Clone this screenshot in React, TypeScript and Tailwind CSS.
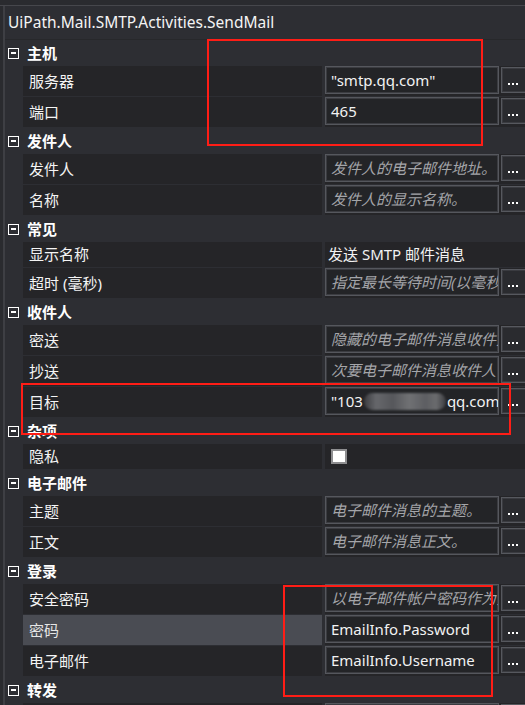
type Row = {
  label: string;
  kind: "input" | "text" | "check" | "blur";
  value?: string;
  placeholder?: string;
  active?: boolean;
};

type Section = { title: string; rows: Row[] };

const sections: Section[] = [
  {
    title: "主机",
    rows: [
      { label: "服务器", kind: "input", value: '"smtp.qq.com"' },
      { label: "端口", kind: "input", value: "465" },
    ],
  },
  {
    title: "发件人",
    rows: [
      { label: "发件人", kind: "input", placeholder: "发件人的电子邮件地址。" },
      { label: "名称", kind: "input", placeholder: "发件人的显示名称。" },
    ],
  },
  {
    title: "常见",
    rows: [
      { label: "显示名称", kind: "text", value: "发送 SMTP 邮件消息" },
      { label: "超时 (毫秒)", kind: "input", placeholder: "指定最长等待时间(以毫秒为单位)" },
    ],
  },
  {
    title: "收件人",
    rows: [
      { label: "密送", kind: "input", placeholder: "隐藏的电子邮件消息收件人" },
      { label: "抄送", kind: "input", placeholder: "次要电子邮件消息收件人" },
      { label: "目标", kind: "blur" },
    ],
  },
  { title: "杂项", rows: [{ label: "隐私", kind: "check" }] },
  {
    title: "电子邮件",
    rows: [
      { label: "主题", kind: "input", placeholder: "电子邮件消息的主题。" },
      { label: "正文", kind: "input", placeholder: "电子邮件消息正文。" },
    ],
  },
  {
    title: "登录",
    rows: [
      { label: "安全密码", kind: "input", placeholder: "以电子邮件帐户密码作为安全字符串" },
      { label: "密码", kind: "input", value: "EmailInfo.Password", active: true },
      { label: "电子邮件", kind: "input", value: "EmailInfo.Username" },
    ],
  },
  { title: "转发", rows: [{ label: "邮件消息", kind: "input" }] },
];

function Minus() {
  return (
    <div className="ml-[3px] flex h-[11px] w-[11px] items-center justify-center border border-white">
      <div className="h-[1.5px] w-[5px] bg-white" />
    </div>
  );
}

function Dots() {
  return (
    <div className="ml-[2px] mt-px flex h-[26px] w-[30px] shrink-0 items-end gap-[2px] border border-[#56585e] bg-[#2a2b2f] pb-[7px] pl-[6px] shadow-[inset_0_0_0_1px_#3a3b40]">
      <div className="h-[2px] w-[2px] bg-white" />
      <div className="h-[2px] w-[2px] bg-white" />
      <div className="h-[2px] w-[2px] bg-white" />
    </div>
  );
}

function Box({ children }: { children?: React.ReactNode }) {
  return (
    <div className="flex h-[28px] w-[174px] shrink-0 items-center overflow-hidden whitespace-nowrap border border-[#55575d] bg-[#232427] pl-[5px] shadow-[inset_0_0_0_1px_#3b3c41]">
      {children}
    </div>
  );
}

function Value({ row }: { row: Row }) {
  if (row.kind === "text") {
    return <span className="pl-[3px] text-[15px] text-[#f2f2f2]">{row.value}</span>;
  }
  if (row.kind === "check") {
    return <div className="ml-[6px] h-[15px] w-[16px] border-2 border-[#8e8e90] bg-white" />;
  }
  return (
    <div className="flex h-full items-start">
      <Box>
        {row.kind === "blur" ? (
          <span className="flex shrink-0 items-center text-[15px] text-[#f2f2f2]">
            "103
            <span className="mx-[1px] inline-block h-[17px] w-[82px] shrink-0 rounded-full bg-[linear-gradient(90deg,#3c3d41,#66676b_15%,#56575b_35%,#707174_55%,#5d5e62_75%,#6a6b6e_88%,#3c3d41)] blur-[1px]" />
            qq.com
          </span>
        ) : row.value ? (
          <span className="text-[15px] text-[#f2f2f2]">{row.value}</span>
        ) : (
          <span className="text-[15px] italic text-[#a4a5a9]">{row.placeholder}</span>
        )}
      </Box>
      <Dots />
    </div>
  );
}

function PropRow({ row }: { row: Row }) {
  const h = row.kind === "input" || row.kind === "blur" ? "h-[30px]" : "h-[25px]";
  return (
    <div className={`mb-px ml-[18px] flex gap-[3px] ${h}`}>
      <div
        className={`flex w-[299px] shrink-0 items-center pl-[6px] text-[15px] ${
          row.active ? "bg-[#4a4c53] text-[#e6e6e6]" : "bg-[#252528] text-[#f4f4f4]"
        }`}
      >
        {row.label}
      </div>
      <div className="flex flex-1 items-center bg-[#252528]">
        <Value row={row} />
      </div>
    </div>
  );
}

function RedBox({ className }: { className: string }) {
  return <div className={`pointer-events-none absolute border-2 border-[#ff1d16] ${className}`} />;
}

export default function App() {
  return (
    <div className="relative h-[705px] w-[525px] overflow-hidden bg-[#2a2b2f] font-['Noto_Sans','Noto_Sans_CJK_SC',sans-serif] leading-none">
      <div className="h-[6px] border-b border-[#46474c]" />
      <div className="ml-[3px] border-l-2 border-[#3e3f44] bg-[#2d2e33]">
        <div className="flex h-[34px] items-center border-b border-[#27282b] pl-[3px] text-[15.5px] text-[#f4f4f4]">
          UiPath.Mail.SMTP.Activities.SendMail
        </div>
        {sections.map((s) => (
          <div key={s.title}>
            <div className="flex h-[26px] items-center gap-[8px]">
              <Minus />
              <span className="text-[15px] font-bold text-white">{s.title}</span>
            </div>
            {s.rows.map((r) => (
              <PropRow key={s.title + r.label} row={r} />
            ))}
          </div>
        ))}
      </div>
      <RedBox className="left-[207px] top-[39px] h-[107px] w-[276px]" />
      <RedBox className="left-[21px] top-[383px] h-[52px] w-[490px]" />
      <RedBox className="left-[283px] top-[585px] h-[112px] w-[210px]" />
    </div>
  );
}
